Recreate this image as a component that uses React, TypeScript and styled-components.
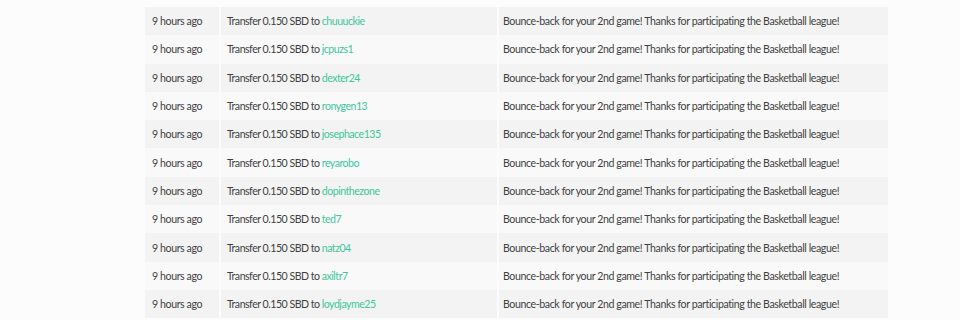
import styled, { createGlobalStyle } from "styled-components";

const GlobalStyle = createGlobalStyle`
  body {
    margin: 0;
    background: #fcfcfc;
    font-family: "Lato", "Open Sans", sans-serif;
  }
`

const recipients = [
    "chuuuckie",
    "jcpuzs1",
    "dexter24",
    "ronygen13",
    "josephace135",
    "reyarobo",
    "dopinthezone",
    "ted7",
    "natz04",
    "axiltr7",
    "loydjayme25",
]

const memo = "Bounce-back for your 2nd game! Thanks for participating the Basketball league!"

export default function App() {
    return (
        <>
            <GlobalStyle />
            <Page>
                <Table>
                    <tbody>
                        {recipients.map((name, i) => (
                            <Row key={name} $striped={i % 2 === 0}>
                                <TimeCell>9 hours ago</TimeCell>
                                <TransferCell>
                                    Transfer 0.150 SBD to <Account href="#">{name}</Account>
                                </TransferCell>
                                <MemoCell>{memo}</MemoCell>
                            </Row>
                        ))}
                    </tbody>
                </Table>
            </Page>
        </>
    )
}

const Page = styled.div`
  padding: 7px 0 0 145px;
`

const Table = styled.table`
  width: 743px;
  border-collapse: collapse;
  table-layout: fixed;
  font-size: 10.6px;
  letter-spacing: -0.4px;
  color: #3f3f3f;
`

const Row = styled.tr<{ $striped: boolean }>`
  height: 28.3px;
  background: ${p => (p.$striped ? "#f3f3f3" : "#f9f9f9")};
`

const Cell = styled.td`
  padding: 0 5px;
  border-left: 2px solid #fcfcfc;
  white-space: nowrap;
  vertical-align: middle;
`

const TimeCell = styled(Cell)`
  width: 62px;
  padding-left: 7px;
  border-left: 0;
`

const TransferCell = styled(Cell)`
  width: 265px;
  padding-left: 6px;
  letter-spacing: -0.5px;
`

const MemoCell = styled(Cell)`
  padding-left: 4px;
`

const Account = styled.a`
  color: #3ec79c;
  text-decoration: none;
`
